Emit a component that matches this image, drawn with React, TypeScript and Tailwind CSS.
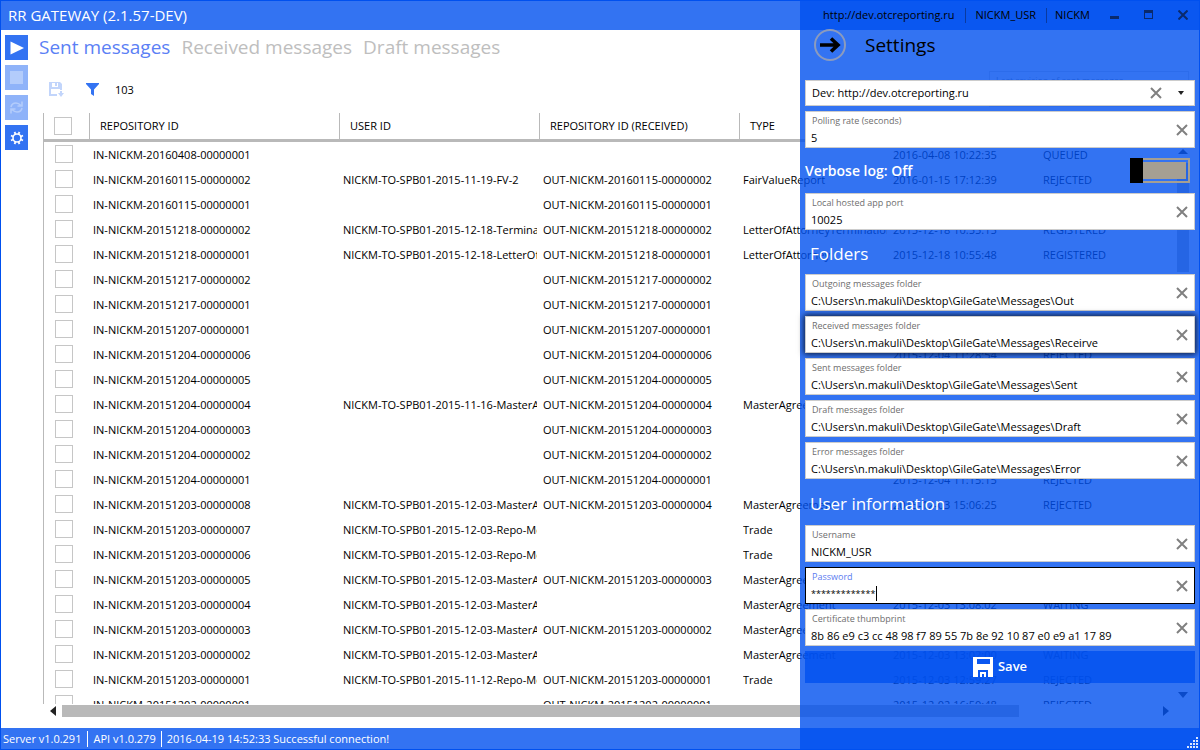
import { ReactNode } from 'react';
import clsx from 'clsx';

type Row = {
  id: string;
  user?: string;
  received?: string;
  type?: string;
  date?: string;
  status?: string;
};

const rows: Row[] = [
  { id: '20160408-00000001', date: '2016-04-08 10:22:35', status: 'QUEUED' },
  { id: '20160115-00000002', user: '2015-11-19-FV-2', received: '20160115-00000002', type: 'FairValueReport', date: '2016-01-15 17:12:39', status: 'REJECTED' },
  { id: '20160115-00000001', received: '20160115-00000001' },
  { id: '20151218-00000002', user: '2015-12-18-Terminat', received: '20151218-00000002', type: 'LetterOfAttorneyTermination', date: '2015-12-18 10:55:15', status: 'REGISTERED' },
  { id: '20151218-00000001', user: '2015-12-18-LetterOf.', received: '20151218-00000001', type: 'LetterOfAttorney', date: '2015-12-18 10:55:48', status: 'REGISTERED' },
  { id: '20151217-00000002', received: '20151217-00000002' },
  { id: '20151217-00000001', received: '20151217-00000001' },
  { id: '20151207-00000001', received: '20151207-00000001' },
  { id: '20151204-00000006', received: '20151204-00000006', date: '2015-12-04 11:28:54', status: 'REJECTED' },
  { id: '20151204-00000005', received: '20151204-00000005' },
  { id: '20151204-00000004', user: '2015-11-16-MasterA', received: '20151204-00000004', type: 'MasterAgreement' },
  { id: '20151204-00000003', received: '20151204-00000003' },
  { id: '20151204-00000002', received: '20151204-00000002' },
  { id: '20151204-00000001', received: '20151204-00000001', date: '2015-12-04 11:15:15', status: 'REJECTED' },
  { id: '20151203-00000008', user: '2015-12-03-MasterA', received: '20151203-00000004', type: 'MasterAgreement', date: '2015-12-03 15:06:25', status: 'REJECTED' },
  { id: '20151203-00000007', user: '2015-12-03-Repo-Me', type: 'Trade' },
  { id: '20151203-00000006', user: '2015-12-03-Repo-Me', type: 'Trade' },
  { id: '20151203-00000005', user: '2015-12-03-MasterA', received: '20151203-00000003', type: 'MasterAgreement' },
  { id: '20151203-00000004', user: '2015-12-03-MasterA', type: 'MasterAgreement', date: '2015-12-03 13:08:02', status: 'WAITING' },
  { id: '20151203-00000003', user: '2015-12-03-MasterA', received: '20151203-00000002', type: 'MasterAgreement' },
  { id: '20151203-00000002', user: '2015-12-03-MasterA', type: 'MasterAgreement', date: '2015-12-03 13:02:00', status: 'WAITING' },
  { id: '20151203-00000001', user: '2015-11-12-Repo-Me', received: '20151203-00000001', type: 'Trade', date: '2015-12-03 12:59:27', status: 'REJECTED' },
  { id: '20151202-00000001', received: '20151202-00000001', date: '2015-12-02 16:50:48', status: 'REJECTED' },
];

const folders = [
  { id: 'outgoing', label: 'Outgoing messages folder', value: 'C:\\Users\\n.makuli\\Desktop\\GileGate\\Messages\\Out' },
  { id: 'received', label: 'Received messages folder', value: 'C:\\Users\\n.makuli\\Desktop\\GileGate\\Messages\\Receirve', raised: true },
  { id: 'sent', label: 'Sent messages folder', value: 'C:\\Users\\n.makuli\\Desktop\\GileGate\\Messages\\Sent' },
  { id: 'draft', label: 'Draft messages folder', value: 'C:\\Users\\n.makuli\\Desktop\\GileGate\\Messages\\Draft' },
  { id: 'error', label: 'Error messages folder', value: 'C:\\Users\\n.makuli\\Desktop\\GileGate\\Messages\\Error' },
];

function ClearIcon() {
  return (
    <svg width="12" height="12" viewBox="0 0 12 12" stroke="#808080" strokeWidth="2" fill="none">
      <path d="M1 1L11 11M11 1L1 11" />
    </svg>
  );
}

type FieldProps = { id: string; label: string; value: string; raised?: boolean; active?: boolean };

function Field({ id, label, value, raised, active }: FieldProps) {
  return (
    <div
      className={clsx(
        'relative flex h-[37px] items-center border bg-white',
        active ? 'border-black' : 'border-[#cccccc]',
        raised && 'shadow-[0_0_6px_1px_rgba(0,0,0,0.8)]'
      )}
    >
      <div className="flex min-w-0 flex-1 flex-col pl-[5px]">
        <label htmlFor={id} className={clsx('pl-px text-[9px] leading-4', active ? 'text-[#5b7cf0]' : 'text-[#6e6e6e]')}>
          {label}
        </label>
        <div className="flex items-center">
          <input
            id={id}
            defaultValue={value}
            className={clsx('h-[18px] bg-transparent outline-none', active ? 'w-[65px] text-[9px]' : 'w-full text-[11px]')}
          />
          {active && <span className="h-[15px] w-px bg-black" />}
        </div>
      </div>
      <button aria-label={`Clear ${label}`} className="flex w-6 justify-center">
        <ClearIcon />
      </button>
    </div>
  );
}

function Th({ children }: { children?: ReactNode }) {
  return (
    <th className="h-[29px] border-b-[3px] border-[#b9b9b9] p-0 text-left font-normal">
      <div className="flex h-[26px] items-center border-l border-[#b9b9b9] pl-[10px]">{children}</div>
    </th>
  );
}

function Td({ children }: { children?: ReactNode }) {
  return (
    <td className="py-0 pl-1 pr-[2px]">
      <div className="overflow-hidden whitespace-nowrap pt-px">{children}</div>
    </td>
  );
}

function Check({ label }: { label: string }) {
  return <input type="checkbox" aria-label={label} className="block size-[18px] appearance-none border border-[#c6c6c6] bg-white" />;
}

function TitleBar() {
  return (
    <header className="flex h-[30px] shrink-0 items-center justify-between bg-[#3373f2] pl-2 text-white">
      <h1 className="text-[15px]">RR GATEWAY (2.1.57-DEV)</h1>
      <div className="relative z-20 flex h-full items-center text-[11px] text-black">
        <span className="pr-[10px]">http://dev.otcreporting.ru</span>
        <span className="h-[15px] w-px bg-[#0a3aa0]" />
        <span className="px-[10px]">NICKM_USR</span>
        <span className="h-[15px] w-px bg-[#0a3aa0]" />
        <span className="px-2">NICKM</span>
        <div className="flex items-center text-[#0a2a6c]">
          <button aria-label="Minimize" className="flex w-[34px] justify-center">
            <svg width="10" height="10" viewBox="0 0 10 10" fill="currentColor">
              <path d="M0 6h9v3H0z" />
            </svg>
          </button>
          <button aria-label="Maximize" className="flex w-[34px] justify-center">
            <svg width="10" height="10" viewBox="0 0 10 10" fill="currentColor" fillRule="evenodd">
              <path d="M0 0h9v9H0zM1 3v5h7V3z" />
            </svg>
          </button>
          <button aria-label="Close" className="flex w-[34px] justify-center">
            <svg width="10" height="10" viewBox="0 0 10 10" stroke="currentColor" strokeWidth="2">
              <path d="M0.5 0.5L9.5 9.5M9.5 0.5L0.5 9.5" />
            </svg>
          </button>
        </div>
      </div>
    </header>
  );
}

function SideBar() {
  return (
    <nav className="flex w-7 shrink-0 flex-col gap-[5px] pl-[5px] pt-[5px]">
      <button aria-label="Start" className="flex h-[25px] items-center justify-center bg-[#3373f2]">
        <svg width="14" height="14" viewBox="0 0 14 14" fill="white">
          <path d="M0.5 0.5L14 7L0.5 13.5z" />
        </svg>
      </button>
      <button aria-label="Stop" disabled className="flex h-[25px] items-center justify-center bg-[#8fb3f9]">
        <svg width="13" height="13" viewBox="0 0 13 13" fill="#b3ccfb">
          <path d="M0 0h13v13H0z" />
        </svg>
      </button>
      <button aria-label="Refresh" disabled className="flex h-[25px] items-center justify-center bg-[#8fb3f9]">
        <svg width="13" height="13" viewBox="0 0 13 13" fill="none" stroke="#b3ccfb" strokeWidth="1.6">
          <path d="M1 6C1.500 3.500 3.500 2 6 2C8 2 9.500 3 11 4.500M12 0.500V5H7.500M12 7C11.500 9.500 9.500 11 7 11C5 11 3.500 10 2 8.500M1 12.500V8H5.500" />
        </svg>
      </button>
      <button aria-label="Settings" className="flex h-[25px] items-center justify-center bg-[#3373f2]">
        <svg width="14" height="14" viewBox="0 0 14 14" fill="none" stroke="white">
          <circle cx="7" cy="7" r="4" strokeWidth="1.600" />
          <path d="M11 8.500L13 9.500M8.500 11L9.500 13M5.500 11L4.500 13M3 8.500L1 9.500M3 5.500L1 4.500M5.500 3L4.500 1M8.500 3L9.500 1M11 5.500L13 4.500" strokeWidth="1.800" />
        </svg>
      </button>
    </nav>
  );
}

function MessagesTable() {
  return (
    <div className="flex min-h-0 flex-1 flex-col">
      <div className="flex min-h-0 flex-1">
        <div className="min-w-0 flex-1 overflow-hidden border-l border-[#b9b9b9]">
          <table className="w-full table-fixed border-separate border-spacing-0 text-[11px] text-black">
            <colgroup>
              <col className="w-[45px]" />
              <col className="w-[250px]" />
              <col className="w-[200px]" />
              <col className="w-[200px]" />
              <col className="w-[150px]" />
              <col className="w-[150px]" />
              <col />
            </colgroup>
            <thead>
              <tr>
                <th className="h-[29px] border-b-[3px] border-[#b9b9b9] p-0 pl-[10px]">
                  <Check label="Select all" />
                </th>
                <Th>REPOSITORY ID</Th>
                <Th>USER ID</Th>
                <Th>REPOSITORY ID (RECEIVED)</Th>
                <Th>TYPE</Th>
                <Th />
                <Th />
              </tr>
            </thead>
            <tbody>
              {rows.map((r) => (
                <tr key={r.id} className="h-[25px]">
                  <td className="p-0 pb-px pl-[11px]">
                    <Check label={`Select IN-NICKM-${r.id}`} />
                  </td>
                  <Td>IN-NICKM-{r.id}</Td>
                  <Td>{r.user && `NICKM-TO-SPB01-${r.user}`}</Td>
                  <Td>{r.received && `OUT-NICKM-${r.received}`}</Td>
                  <Td>{r.type}</Td>
                  <Td>{r.date}</Td>
                  <Td>{r.status}</Td>
                </tr>
              ))}
            </tbody>
          </table>
        </div>
        {/* vertical scroll bar */}
        <div className="flex w-3 shrink-0 flex-col items-center pb-[6px] pt-9">
          <svg width="10" height="5" viewBox="0 0 10 5" fill="#333">
            <path d="M5 0L10 5H0z" />
          </svg>
          <div className="mt-[9px] h-[109px] w-full bg-[#b9b9b9]" />
          <svg width="10" height="6" viewBox="0 0 10 6" fill="#333" className="mt-auto">
            <path d="M0 0h10L5 6z" />
          </svg>
        </div>
      </div>
      {/* horizontal scroll bar */}
      <div className="mb-[11px] mt-px flex h-3 items-center pl-[7px] pr-5">
        <svg width="6" height="10" viewBox="0 0 6 10" fill="#222">
          <path d="M6 0v10L0 5z" />
        </svg>
        <div className="ml-[6px] mr-36 h-full flex-1 bg-[#b9b9b9]" />
        <svg width="6" height="10" viewBox="0 0 6 10" fill="#222">
          <path d="M0 0v10l6-5z" />
        </svg>
      </div>
    </div>
  );
}

function SettingsPanel() {
  return (
    <aside className="absolute inset-y-0 right-0 z-10 flex w-[400px] flex-col bg-[#0050ef]/80 px-[5px] pt-[29px]">
      <div className="flex h-8 items-center gap-[19px] pl-[9px]">
        <button aria-label="Close settings" className="size-8">
          <svg width="32" height="32" viewBox="0 0 32 32" fill="none">
            <circle cx="16" cy="16" r="15" stroke="#8c9bbd" strokeWidth="2" />
            <path d="M6 16H24M17 9.500L24 16L17 22.500" stroke="black" strokeWidth="3.600" />
          </svg>
        </button>
        <h2 className="text-[19px] text-black">Settings</h2>
      </div>

      <div className="mt-[19px] flex h-[26px] items-center border border-[#cccccc] bg-white">
        <select aria-label="Server" className="h-full min-w-0 flex-1 appearance-none bg-white pl-[6px] text-[11px] outline-none">
          <option>Dev: http://dev.otcreporting.ru</option>
        </select>
        <button aria-label="Clear server" className="flex w-6 justify-center">
          <ClearIcon />
        </button>
        <svg width="6" height="4" viewBox="0 0 6 4" fill="#222" className="ml-[10px] mr-[10px]">
          <path d="M0 0h6L3 4z" />
        </svg>
      </div>
      <div className="mt-[5px]">
        <Field id="polling" label="Polling rate (seconds)" value="5" />
      </div>

      <div className="flex h-[45px] items-center justify-between pr-[5px]">
        <label htmlFor="verbose" className="text-[14px] font-semibold text-white">
          Verbose log: Off
        </label>
        <div className="relative flex h-[25px] w-[60px] border-2 border-[#a59f93] p-[2px]">
          <div className="flex-1 bg-[#a59f93]" />
          <input id="verbose" type="checkbox" className="absolute -left-[2px] -top-[2px] h-[25px] w-[13px] appearance-none bg-black" />
        </div>
      </div>
      <Field id="port" label="Local hosted app port" value="10025" />

      <h3 className="flex h-11 items-center pl-[5px] pt-1 text-[17px] text-white">Folders</h3>
      <div className="flex flex-col gap-[5px]">
        {folders.map((f) => (
          <Field key={f.id} {...f} />
        ))}
      </div>

      <h3 className="flex h-[46px] items-center pl-[5px] pt-1 text-[17px] text-white">User information</h3>
      <div className="flex flex-col gap-[5px]">
        <Field id="username" label="Username" value="NICKM_USR" />
        <Field id="password" label="Password" value="*************" active />
        <Field id="thumbprint" label="Certificate thumbprint" value="8b 86 e9 c3 cc 48 98 f7 89 55 7b 8e 92 10 87 e0 e9 a1 17 89" />
      </div>
      <button className="mt-[5px] flex h-8 items-center justify-center gap-[5px] bg-[#0050ef]/80 text-[13px] font-semibold text-white">
        <svg width="20" height="20" viewBox="0 0 20 20" fill="white" fillRule="evenodd">
          <path d="M0 0H20V20H15V13H5V20H0zM4 2V7H17V2zM7 15h6v5h-2v-3H9v3H7z" />
        </svg>
        Save
      </button>
      <svg width="11" height="11" viewBox="0 0 11 11" fill="white" fillOpacity="0.850" className="absolute bottom-[2px] right-[2px]">
        <path d="M9 0h2v2H9zM6 3h2v2H6zM9 3h2v2H9zM3 6h2v2H3zM6 6h2v2H6zM9 6h2v2H9zM0 9h2v2H0zM3 9h2v2H3zM6 9h2v2H6zM9 9h2v2H9z" />
      </svg>
    </aside>
  );
}

export default function App() {
  return (
    <div className="relative flex h-screen flex-col overflow-hidden bg-white font-['Open_Sans','Noto_Sans',sans-serif]">
      <TitleBar />
      <div className="flex min-h-0 flex-1">
        <SideBar />
        <main className="flex min-w-0 flex-1 flex-col pl-[15px] pr-[11px]">
          <div className="flex h-9 shrink-0 items-center gap-[11px] whitespace-nowrap pb-[2px] text-[19px] text-[#bebebe]">
            <button className="-ml-1 text-[#5b80f5]">Sent messages</button>
            <button>Received messages</button>
            <button>Draft messages</button>
          </div>
          <div className="flex h-[47px] shrink-0 items-center pl-[6px]">
            <button aria-label="Export" disabled>
              <svg width="15" height="15" viewBox="0 0 15 15" fill="#c2d5fb" fillRule="evenodd">
                <path d="M0 0H11L13 2V9H11V7H2V12H8V14H0zM3 1V5H9V1zM6 1h2v3H6zM11 8h2v3h2l-3 4l-3-4h2z" />
              </svg>
            </button>
            <button aria-label="Filter" className="ml-[22px]">
              <svg width="13" height="13" viewBox="0 0 13 13" fill="#3373f2">
                <path d="M0 0H13V1L8 6.500V13L5 11V6.500L0 1z" />
              </svg>
            </button>
            <span className="ml-4 pt-px text-[11px]">103</span>
            <input
              aria-label="Last revision of sent messages"
              placeholder="Last revision of sent messages"
              className="ml-auto mt-[5px] h-9 w-[200px] self-start border border-[#dddddd] px-[6px] pb-[18px] text-[9px] placeholder:text-[#999999]"
            />
          </div>
          <MessagesTable />
        </main>
      </div>
      <footer className="flex h-[22px] shrink-0 items-center bg-[#3373f2] pl-[3px] text-[11px] text-white">
        <span className="pr-[6px]">Server v1.0.291</span>
        <span className="border-l border-white px-[5px]">API v1.0.279</span>
        <span className="border-l border-white px-[5px]">2016-04-19 14:52:33 Successful connection!</span>
      </footer>
      <SettingsPanel />
      {/* window frame */}
      <div className="pointer-events-none absolute inset-0 z-30 border border-[#0050ef]" />
    </div>
  );
}
